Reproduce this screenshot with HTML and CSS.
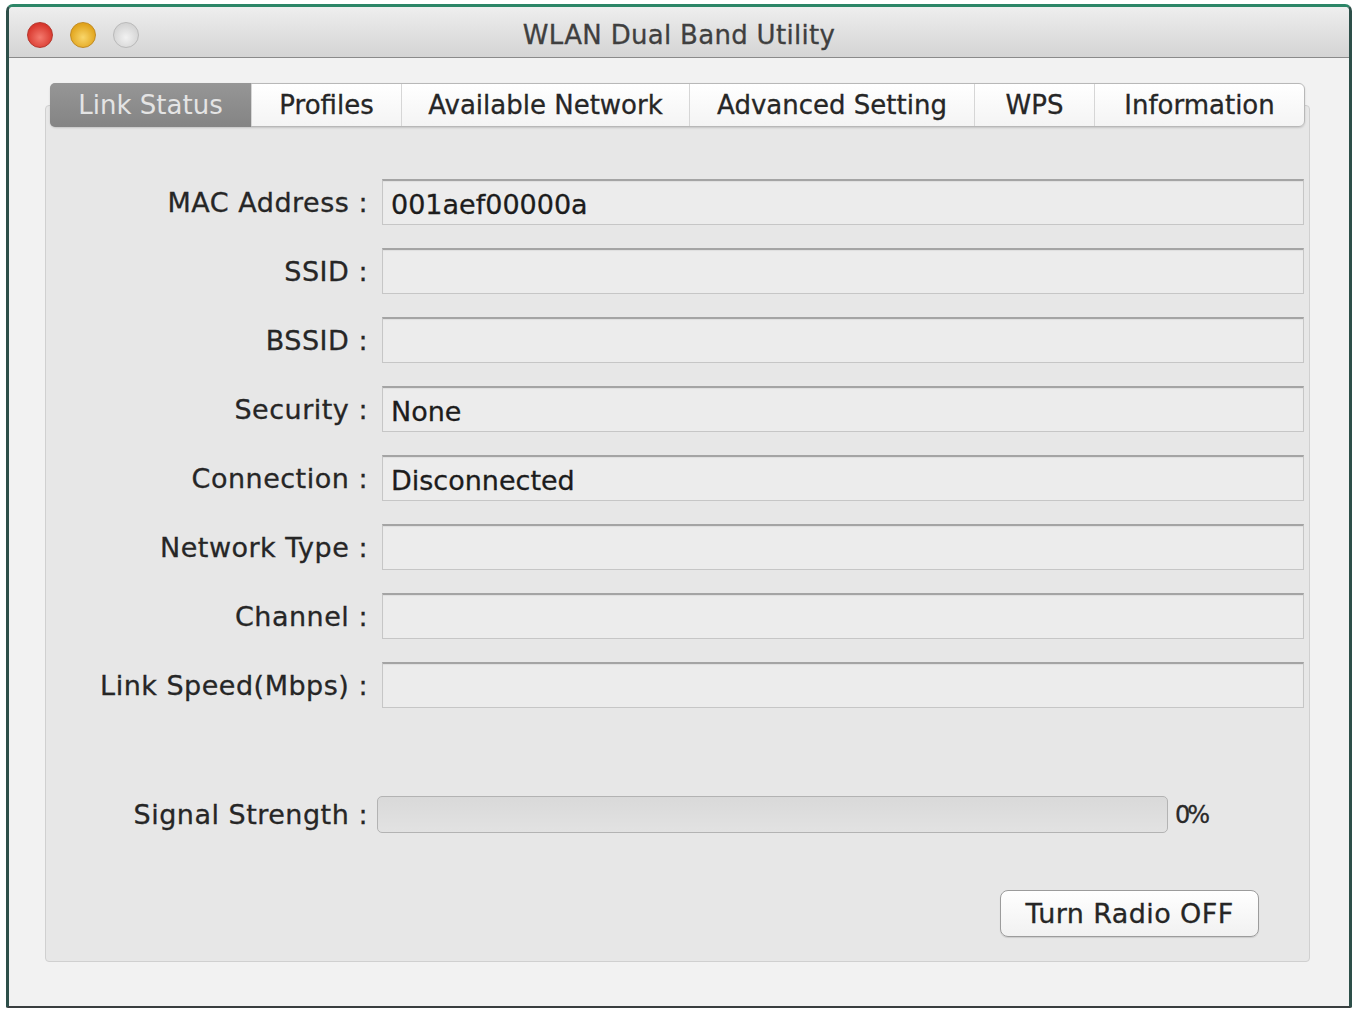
FILE: index.html
```html
<!DOCTYPE html>
<html lang="en">
<head>
  <meta charset="UTF-8">
  <title>WLAN Dual Band Utility</title>
  <link rel="stylesheet" href="styles.css">
</head>
<body>

  <div class="window">
    <div class="titlebar">
      <div class="lights">
        <span class="light red"></span>
        <span class="light yellow"></span>
        <span class="light gray"></span>
      </div>
      <div class="title">WLAN Dual Band Utility</div>
      <div></div>
    </div>

    <div class="content">
      <div class="tabs">
        <div class="tab active">Link Status</div>
        <div class="tab">Profiles</div>
        <div class="tab">Available Network</div>
        <div class="tab">Advanced Setting</div>
        <div class="tab">WPS</div>
        <div class="tab">Information</div>
      </div>

      <div class="panel">
        <div class="fields">
          <label>MAC Address :</label>
          <div class="field">001aef00000a</div>
          <label>SSID :</label>
          <div class="field"></div>
          <label>BSSID :</label>
          <div class="field"></div>
          <label>Security :</label>
          <div class="field">None</div>
          <label>Connection :</label>
          <div class="field">Disconnected</div>
          <label>Network Type :</label>
          <div class="field"></div>
          <label>Channel :</label>
          <div class="field"></div>
          <label>Link Speed(Mbps) :</label>
          <div class="field"></div>
        </div>

        <div class="signal">
          <label>Signal Strength :</label>
          <div class="bar"></div>
          <span class="percent">0%</span>
        </div>

        <div class="actions">
          <button class="radio-btn">Turn Radio OFF</button>
        </div>
      </div>
    </div>
  </div>

</body>
</html>
```

FILE: styles.css
```css
body {
  margin: 0;
  background: #fff;
  font-family: "DejaVu Sans", "Liberation Sans", sans-serif;
  color: #232323;
}

.window {
  margin: 4px 0 0 6px;
  width: 1346px;
  height: 1004px;
  box-sizing: border-box;
  border: 3px solid #2d4f49;
  border-top-color: #2c8667;
  border-bottom: 2px solid #3a3f40;
  border-radius: 7px 7px 2px 2px;
  background: #f2f2f2;
  overflow: hidden;
}

.titlebar {
  height: 51px;
  padding-top: 5px;
  box-sizing: border-box;
  display: grid;
  grid-template-columns: 1fr auto 1fr;
  align-items: center;
  background: linear-gradient(#eeeeee, #d4d4d4);
  border-bottom: 1px solid #8a8a8a;
}

.lights {
  display: flex;
  gap: 17px;
  padding-left: 18px;
}

.light {
  width: 26px;
  height: 26px;
  border-radius: 50%;
  box-sizing: border-box;
}

.light.red {
  background: radial-gradient(circle at 50% 60%, #f47a6e, #d8372d 70%);
  border: 1px solid #b5362c;
}

.light.yellow {
  background: radial-gradient(circle at 50% 60%, #f9d66a, #e1a41c 70%);
  border: 1px solid #c18a22;
}

.light.gray {
  background: radial-gradient(circle at 50% 60%, #f2f2f2, #d4d4d4 70%);
  border: 1px solid #b9b9b9;
}

.title {
  font-size: 26px;
  color: #3f3f3f;
  letter-spacing: 0.3px;
  -webkit-text-stroke: 0.3px #3f3f3f;
}

.content {
  padding: 25px 39px 0 36px;
}

.tabs {
  position: relative;
  z-index: 1;
  margin: 0 5px;
  height: 44px;
  display: grid;
  grid-template-columns: 200px 150px 288px 285px 120px 1fr;
  background: linear-gradient(#ffffff, #f4f4f4);
  border: 1px solid #b8b8b8;
  border-radius: 6px;
  box-shadow: 0 1px 2px rgba(0, 0, 0, 0.15);
  box-sizing: border-box;
}

.tab {
  display: flex;
  align-items: center;
  justify-content: center;
  font-size: 26px;
  color: #262626;
  -webkit-text-stroke: 0.3px #262626;
  border-left: 1px solid #d6d6d6;
}

.tab:first-child {
  border-left: none;
}

.tab.active {
  background: linear-gradient(#969696, #848484);
  color: #e4e4e4;
  -webkit-text-stroke: 0;
  border-radius: 5px 0 0 5px;
  margin: -1px 0 -1px -1px;
}

.panel {
  margin-top: -22px;
  height: 857px;
  box-sizing: border-box;
  padding: 73px 5px 0 0;
  background: #e7e7e7;
  border: 1px solid #d0d0d0;
  border-radius: 4px;
}

.fields {
  display: grid;
  grid-template-columns: 322px 1fr;
  column-gap: 14px;
  row-gap: 23px;
}

label {
  display: flex;
  align-items: center;
  justify-content: flex-end;
  font-size: 27px;
  letter-spacing: 0.5px;
  color: #262626;
  -webkit-text-stroke: 0.3px #262626;
  white-space: nowrap;
}

.field {
  height: 46px;
  box-sizing: border-box;
  display: flex;
  align-items: center;
  padding: 3px 0 0 8px;
  font-size: 27px;
  color: #1c1c1c;
  -webkit-text-stroke: 0.3px #1c1c1c;
  background: #ececec;
  border: 1px solid #c6c6c6;
  border-top: 2px solid #a4a4a4;
  box-shadow: inset 0 1px 1px rgba(0, 0, 0, 0.06);
}

.signal {
  margin-top: 88px;
  display: grid;
  grid-template-columns: 322px 791px auto;
  column-gap: 9px;
  align-items: center;
}

.signal .percent {
  font-size: 24px;
  color: #2a2a2a;
  letter-spacing: -3px;
  margin-left: -2px;
  -webkit-text-stroke: 0.3px #2a2a2a;
}

.bar {
  height: 37px;
  box-sizing: border-box;
  background: linear-gradient(#d9d9d9, #e2e2e2);
  border: 1px solid #b3b3b3;
  border-radius: 5px;
}

.actions {
  margin-top: 57px;
  display: flex;
  justify-content: flex-end;
  padding-right: 45px;
}

.radio-btn {
  width: 259px;
  height: 47px;
  font-family: inherit;
  font-size: 27px;
  letter-spacing: 0.4px;
  color: #262626;
  -webkit-text-stroke: 0.3px #262626;
  background: linear-gradient(#ffffff, #f1f1f1);
  border: 1px solid #9c9c9c;
  border-radius: 8px;
  box-shadow: 0 1px 1px rgba(0, 0, 0, 0.12);
}
```
